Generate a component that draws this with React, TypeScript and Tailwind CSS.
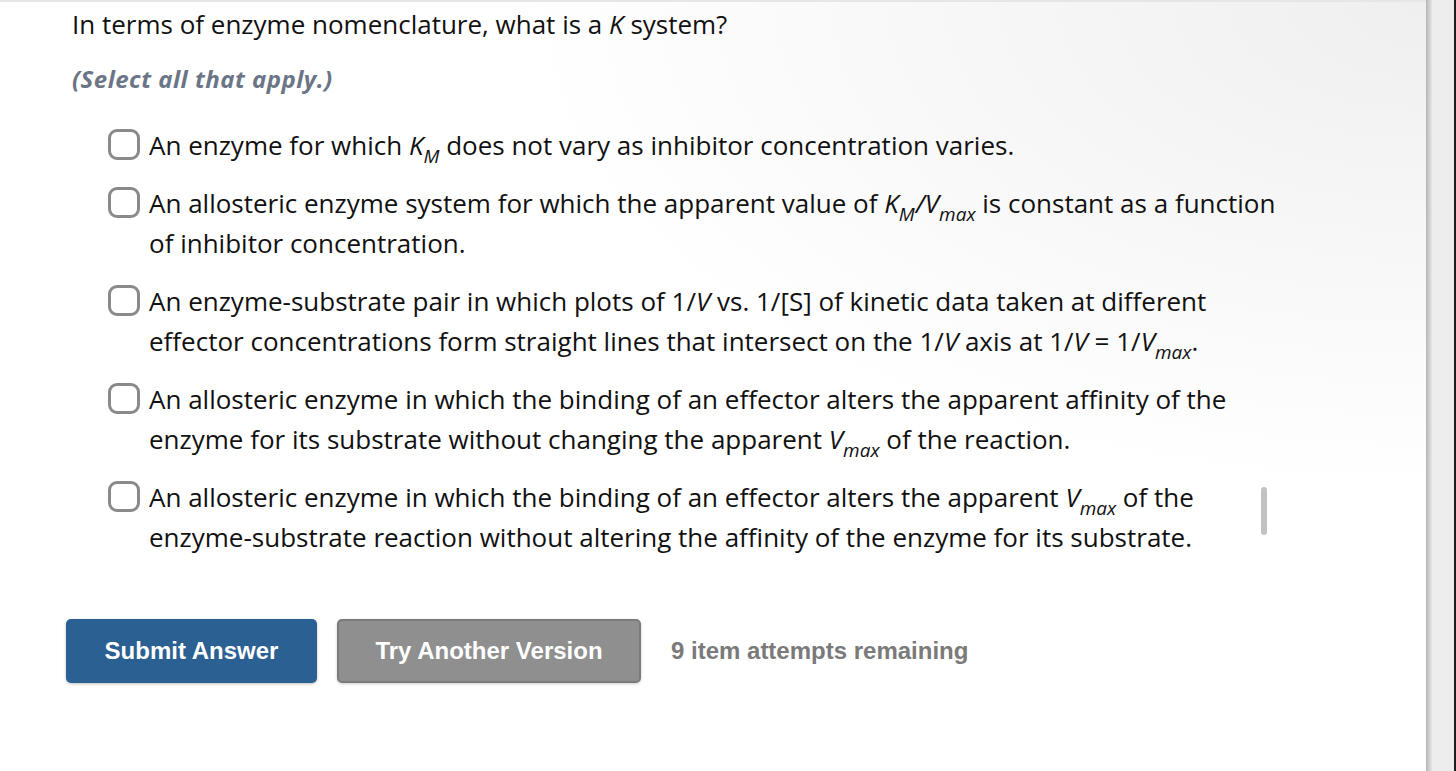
import type { ReactNode } from 'react'

function Sub({ base, sub }: { base: string; sub: string }) {
  return (
    <span className="italic">
      {base}
      <span className="relative top-[8px] text-[19px] leading-none italic">{sub}</span>
    </span>
  )
}

interface OptionProps {
  children: ReactNode
}

function Option({ children }: OptionProps) {
  return (
    <label className="flex items-start gap-[9px]">
      <span className="mt-[4px] h-[31px] w-[32px] shrink-0 rounded-[9px] border-[3px] border-[#8a8a8a] bg-white" />
      <span className="whitespace-nowrap text-[26px] leading-[40px] text-[#111]">{children}</span>
    </label>
  )
}

export default function App() {
  return (
    <div
      className="flex h-[771px] w-[1456px] overflow-hidden bg-white"
      style={{ fontFamily: '"Open Sans", sans-serif' }}
    >
      <main className="relative flex-1 border-t-2 border-[#e6e6e6] bg-[radial-gradient(ellipse_at_top_right,#efefef_0%,#ffffff_45%)]">
        <div className="pl-[72px] pt-[4px] pr-[20px]">
          <h1 className="text-[26px] leading-[36px] text-[#111]">
            In terms of enzyme nomenclature, what is a <span className="italic">K</span> system?
          </h1>
          <p className="mt-[19px] text-[24px] font-bold italic leading-[36px] tracking-[0.02em] text-[#6b7586]">
            (Select all that apply.)
          </p>

          <div className="mt-[28px] flex flex-col gap-[18px] pl-[36px]">
            <Option>
              An enzyme for which <Sub base="K" sub="M" /> does not vary as inhibitor concentration varies.
            </Option>
            <Option>
              An allosteric enzyme system for which the apparent value of <Sub base="K" sub="M" />
              <span className="ml-[1px] italic">/</span>
              <Sub base="V" sub="max" /> is constant as a function
              <br />
              of inhibitor concentration.
            </Option>
            <Option>
              An enzyme-substrate pair in which plots of 1/<span className="italic">V</span> vs. 1/[S] of kinetic
              data taken at different
              <br />
              effector concentrations form straight lines that intersect on the 1/<span className="italic">V</span> axis
              at 1/<span className="italic">V</span> = 1/<Sub base="V" sub="max" />.
            </Option>
            <Option>
              An allosteric enzyme in which the binding of an effector alters the apparent affinity of the
              <br />
              enzyme for its substrate without changing the apparent <Sub base="V" sub="max" /> of the reaction.
            </Option>
            <Option>
              An allosteric enzyme in which the binding of an effector alters the apparent <Sub base="V" sub="max" /> of
              the
              <br />
              enzyme-substrate reaction without altering the affinity of the enzyme for its substrate.
            </Option>
          </div>

          <div
            className="mt-[62px] -ml-[6px] flex items-center gap-[20px]"
            style={{ fontFamily: '"Liberation Sans", Arial, sans-serif' }}
          >
            <button
              type="button"
              className="h-[64px] w-[251px] rounded-[5px] bg-[#2a6092] text-[24px] font-bold text-white shadow-[0_1px_3px_rgba(0,0,0,0.25)]"
            >
              Submit Answer
            </button>
            <button
              type="button"
              className="h-[64px] w-[304px] rounded-[5px] border-2 border-[#7b7b7b] bg-[#8f8f8f] text-[24px] font-bold text-white shadow-[0_1px_3px_rgba(0,0,0,0.2)]"
            >
              Try Another Version
            </button>
            <span className="ml-[10px] text-[24px] font-bold text-[#7a7a7a]">9 item attempts remaining</span>
          </div>
        </div>

        <div className="absolute left-[1261px] top-[485px] h-[48px] w-[6px] rounded-full bg-[#c2c2c2]" />
      </main>

      <aside className="flex w-[30px] shrink-0">
        <div className="w-[6px] bg-gradient-to-r from-[#b5b5b5] to-[#e6e6e6]" />
        <div className="flex-1 bg-[#ededed]" />
        <div className="w-[2px] bg-[#1e1e1e]" />
      </aside>
    </div>
  )
}
